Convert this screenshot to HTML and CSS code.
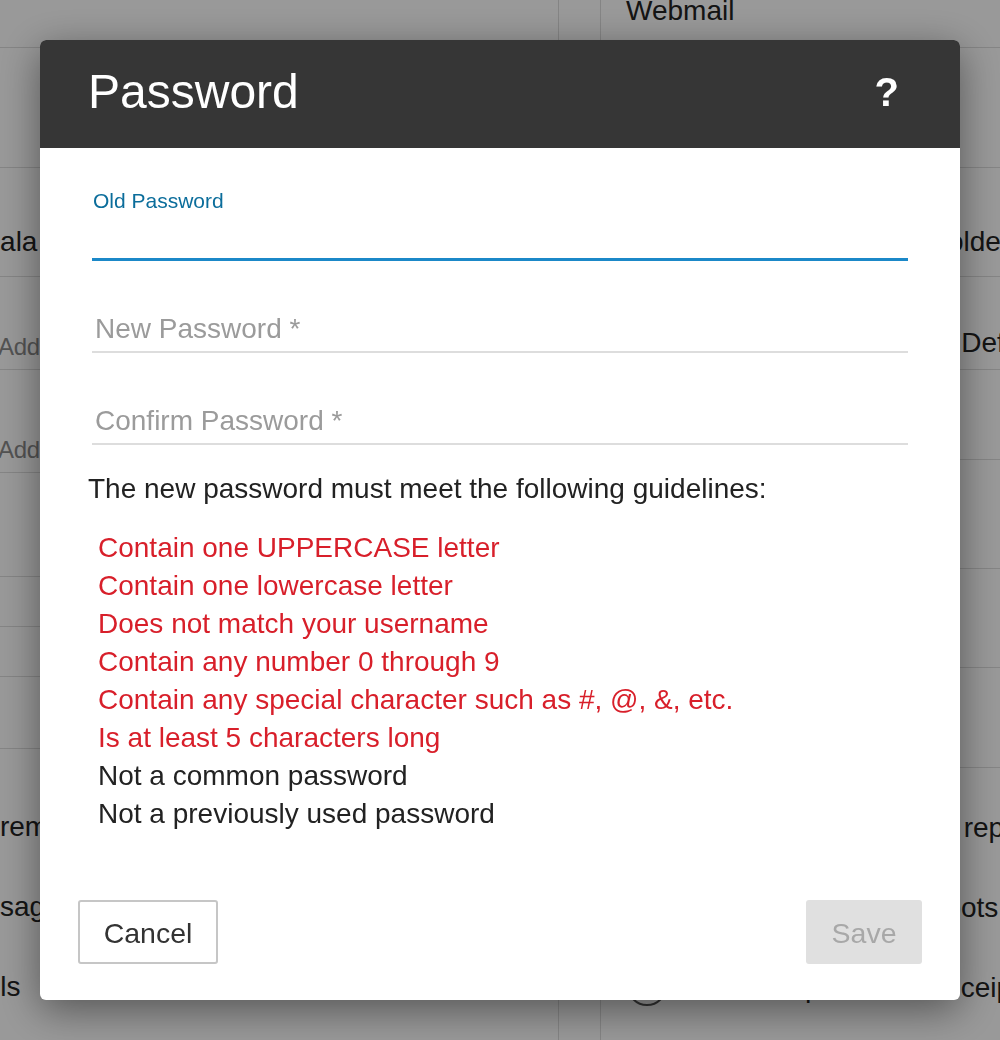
FILE: index.html
```html
<!DOCTYPE html>
<html lang="en">
<head>
<meta charset="utf-8">
<title>Password</title>
<link rel="stylesheet" href="styles.css">
</head>
<body>
<div class="page">
  <div class="col col-left">
    <div class="row r48"></div>
    <div class="row r120"></div>
    <div class="row r109 pt58"><span class="txt cut-guat">America/Guatemala</span></div>
    <div class="row r93 pt56"><span class="txt ph cut-add">Add email address</span></div>
    <div class="row r103 pt66"><span class="txt ph cut-add">Add forwarding address</span></div>
    <div class="row r104"></div>
    <div class="row r50"></div>
    <div class="row r50"></div>
    <div class="row r72"></div>
    <div class="row plain r80 pt62"><span class="txt cut-auto">Auto-remove old messages</span></div>
    <div class="row plain r80 pt62"><span class="txt cut-mes">Message preview</span></div>
    <div class="row plain r80 pt62"><span class="txt cut-det">Details</span></div>
  </div>
  <div class="gutter"></div>
  <div class="col col-right">
    <div class="row r48"><span class="txt webmail">Webmail</span></div>
    <div class="row r120"></div>
    <div class="row r109 pt58"><span class="txt cut-folder">Show Folder</span></div>
    <div class="row r93 pt50"><span class="txt cut-default">Set as Default</span></div>
    <div class="row r90"></div>
    <div class="row r109"></div>
    <div class="row r99"></div>
    <div class="row r100"></div>
    <div class="row plain r80 pt44"><span class="txt cut-rep">Quote original in reply</span></div>
    <div class="row plain r80 pt44"><span class="txt cut-spots">Show Hotspots list</span></div>
    <div class="row plain r80 pt44"><span class="radio"></span><span class="txt cut-rec">Request read receipt</span></div>
  </div>
</div>

<div class="overlay">
  <div class="modal" role="dialog" aria-labelledby="dlg-title">
    <div class="modal-head">
      <h1 id="dlg-title" class="modal-title">Password</h1>
      <span class="help">?</span>
    </div>
    <div class="modal-body">
      <div class="field field-active">
        <label class="field-label">Old Password</label>
        <div class="field-input"></div>
      </div>
      <div class="field field-idle">
        <div class="field-input"><span class="placeholder">New Password *</span></div>
      </div>
      <div class="field field-idle">
        <div class="field-input"><span class="placeholder">Confirm Password *</span></div>
      </div>
      <p class="guide-intro">The new password must meet the following guidelines:</p>
      <ul class="rules">
        <li class="bad">Contain one UPPERCASE letter</li>
        <li class="bad">Contain one lowercase letter</li>
        <li class="bad">Does not match your username</li>
        <li class="bad">Contain any number 0 through 9</li>
        <li class="bad">Contain any special character such as #, @, &amp;, etc.</li>
        <li class="bad">Is at least 5 characters long</li>
        <li>Not a common password</li>
        <li>Not a previously used password</li>
      </ul>
    </div>
    <div class="modal-foot">
      <button class="btn btn-cancel">Cancel</button>
      <button class="btn btn-save" disabled>Save</button>
    </div>
  </div>
</div>
</body>
</html>
```
FILE: styles.css
```css
* { box-sizing: border-box; }
html, body { margin: 0; padding: 0; }
body {
  width: 1000px;
  height: 1040px;
  overflow: hidden;
  font-family: "Liberation Sans", Arial, sans-serif;
  background: #fff;
  color: #222;
}

/* background page */
.page {
  display: flex;
  height: 1040px;
}
.col { display: flex; flex-direction: column; overflow: hidden; }
.col-left { width: 559px; border-right: 1px solid #ddd; }
.gutter { width: 42px; border-right: 1px solid #ddd; }
.col-right { flex: 1; }
.row {
  border-bottom: 1px solid #ddd;
  display: flex;
  align-items: flex-start;
  flex-shrink: 0;
  white-space: nowrap;
}
.row.plain { border-bottom: none; }
.r48 { height: 48px; }
.r120 { height: 120px; }
.r109 { height: 109px; }
.r93 { height: 93px; }
.r90 { height: 90px; }
.r103 { height: 103px; }
.r104 { height: 104px; }
.r99 { height: 99px; }
.r100 { height: 100px; }
.r50 { height: 50px; }
.r72 { height: 72px; }
.r80 { height: 80px; }
.pt44 { padding-top: 44px; }
.pt50 { padding-top: 50px; }
.pt56 { padding-top: 56px; }
.pt58 { padding-top: 58px; }
.pt62 { padding-top: 62px; }
.pt66 { padding-top: 66px; }
.txt { font-size: 28px; line-height: 32px; color: #222; flex-shrink: 0; }
.txt.ph { color: #8a8a8a; font-size: 24px; line-height: 28px; letter-spacing: -0.3px; }
.webmail { margin-left: 25px; margin-top: -5px; }
.cut-guat { margin-left: -210px; }
.cut-add { margin-left: -2px; }
.cut-auto { margin-left: -67px; }
.cut-mes { margin-left: -53px; }
.cut-det { margin-left: -65px; }
.cut-folder { margin-left: 252px; }
.cut-default { margin-left: 273px; }
.cut-rep { margin-left: 151px; }
.cut-spots { margin-left: 209px; }
.cut-rec { margin-left: 93px; }
.radio {
  width: 40px; height: 40px;
  border: 2px solid #555;
  border-radius: 50%;
  margin-left: 26px;
  margin-top: -6px;
  flex-shrink: 0;
}

/* overlay + modal */
.overlay {
  position: fixed;
  inset: 0;
  background: rgba(0, 0, 0, 0.4);
  display: flex;
  justify-content: center;
  padding-top: 40px;
}
.modal {
  width: 920px;
  height: 960px;
  background: #fff;
  border-radius: 6px;
  overflow: hidden;
  display: flex;
  flex-direction: column;
  box-shadow: 0 10px 40px rgba(0, 0, 0, 0.45);
}
.modal-head {
  height: 108px;
  background: #363636;
  display: flex;
  align-items: center;
  justify-content: space-between;
  padding: 0 61px 4px 48px;
  flex-shrink: 0;
}
.modal-title {
  margin: 0;
  font-weight: normal;
  font-size: 48px;
  line-height: 56px;
  color: #fff;
}
.help {
  color: #fff;
  font-size: 40px;
  font-weight: bold;
  line-height: 50px;
}
.modal-body {
  padding: 41px 52px 0 52px;
}
.field-label {
  display: block;
  font-size: 21px;
  line-height: 24px;
  color: #0b6d9b;
  padding-left: 1px;
}
.field-active .field-input {
  height: 48px;
  border-bottom: 3px solid #1b88c8;
}
.field-idle .field-input {
  height: 92px;
  border-bottom: 2px solid #ddd;
  display: flex;
  align-items: flex-end;
  padding: 0 0 7px 3px;
}
.placeholder {
  font-size: 28px;
  line-height: 30px;
  color: #9b9b9b;
}
.guide-intro {
  margin: 29px 0 0 -4px;
  font-size: 28px;
  line-height: 30px;
  color: #222;
}
.rules {
  list-style: none;
  margin: 25px 0 0 6px;
  padding: 0;
}
.rules li {
  font-size: 28px;
  line-height: 38px;
  color: #222;
}
.rules li.bad { color: #d81f2a; }

.modal-foot {
  margin-top: auto;
  display: flex;
  justify-content: space-between;
  padding: 0 38px 36px 38px;
}
.btn {
  height: 64px;
  font-family: "Liberation Sans", Arial, sans-serif;
  font-size: 28.5px;
  border-radius: 3px;
  padding: 3px 0 0 0;
}
.btn-cancel {
  width: 140px;
  background: #fff;
  border: 2px solid #c6c6c6;
  color: #333;
}
.btn-save {
  width: 116px;
  background: #e0e0e0;
  border: none;
  color: #a8a8a8;
}
```
